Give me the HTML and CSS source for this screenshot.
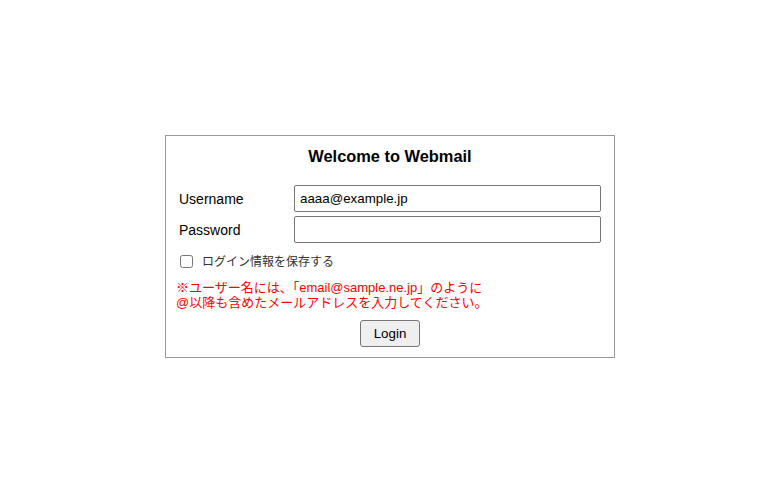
FILE: index.html
```html
<!DOCTYPE html>
<html lang="ja">
<head>
<meta charset="utf-8">
<title>Webmail Login</title>
<link rel="stylesheet" href="styles.css">
</head>
<body>
<div class="login">
  <h1 class="title">Welcome to Webmail</h1>
  <form class="form" action="#">
    <div class="fields">
      <label class="field-label" for="user">Username</label>
      <input class="field-input" type="text" id="user" value="aaaa@example.jp">
      <label class="field-label" for="pass">Password</label>
      <input class="field-input" type="password" id="pass">
    </div>
    <div class="remember">
      <input class="remember-box" type="checkbox" id="remember">
      <label class="remember-label" for="remember">ログイン情報を保存する</label>
    </div>
    <p class="notice">※ユーザー名には、「email@sample.ne.jp」のように<br>@以降も含めたメールアドレスを入力してください。</p>
    <div class="actions">
      <button class="login-button" type="submit">Login</button>
    </div>
  </form>
</div>
</body>
</html>
```

FILE: styles.css
```css
html, body {
  margin: 0;
  padding: 0;
  height: 100%;
  background: #ffffff;
}

body {
  display: flex;
  align-items: center;
  justify-content: center;
  font-family: "Liberation Sans", Arial, "Noto Sans CJK JP", sans-serif;
  color: #000;
}

.login {
  width: 450px;
  box-sizing: border-box;
  border: 1px solid #999999;
  padding: 0 10px 10px;
}

.title {
  margin: 11px 0 0;
  font-size: 16.4px;
  line-height: 19px;
  font-weight: bold;
  text-align: center;
}

.form {
  margin: 0;
}

.fields {
  display: grid;
  grid-template-columns: 115px 1fr;
  row-gap: 4px;
  align-items: center;
  margin: 19px 3px 0;
}

.field-label {
  font-size: 14px;
  line-height: 16px;
}

.field-input {
  box-sizing: border-box;
  height: 27px;
  width: 100%;
  margin: 0;
  padding: 5px;
  border: 1px solid #767676;
  border-radius: 2px;
  font-family: "Liberation Sans", Arial, sans-serif;
  font-size: 13.333px;
  color: #000;
  background: #fff;
}

.remember {
  display: flex;
  align-items: center;
  margin-top: 9px;
  font-size: 12px;
  line-height: 14px;
}

.remember-box {
  width: 13px;
  height: 13px;
  margin: 3px 3px 3px 4px;
}

.remember-label {
  margin-left: 6px;
  color: #333;
}

.notice {
  margin: 9px 0 0;
  font-size: 13px;
  line-height: 15px;
  color: #ff0000;
}

.actions {
  display: flex;
  justify-content: center;
  margin-top: 10px;
}

.login-button {
  box-sizing: border-box;
  height: 27px;
  width: 60px;
  padding: 0;
  border: 1px solid #767676;
  border-radius: 3px;
  background: #efefef;
  font-family: "Liberation Sans", Arial, sans-serif;
  font-size: 13.333px;
  color: #000;
}
```
